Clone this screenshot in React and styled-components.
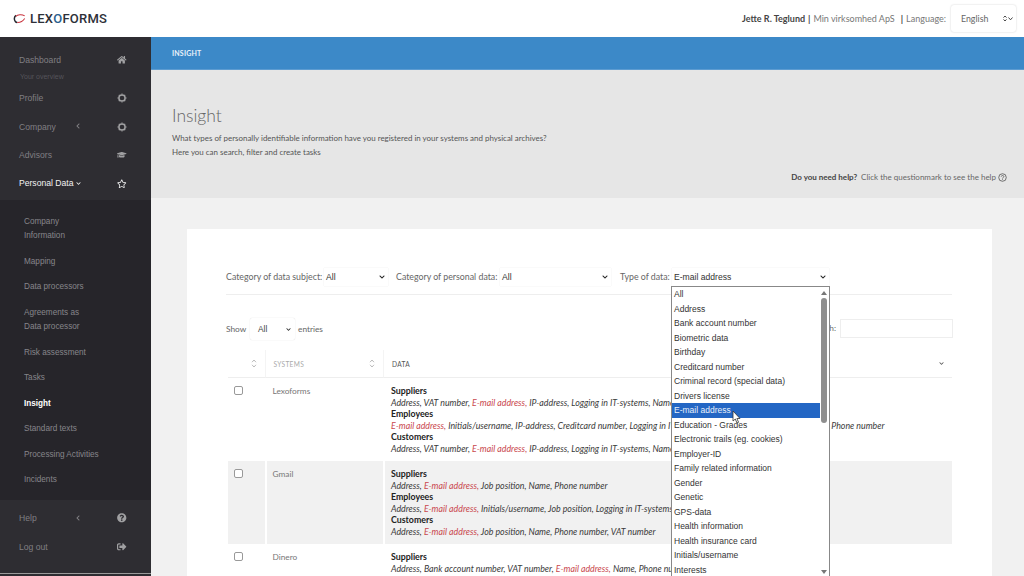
import React from 'react';
import styled, { createGlobalStyle } from 'styled-components';
import { FaHome, FaGraduationCap, FaRegStar, FaQuestionCircle, FaSignOutAlt, FaChevronDown, FaChevronLeft } from 'react-icons/fa';

const Global = createGlobalStyle`
  html, body { margin: 0; padding: 0; height: 576px; overflow: hidden; background: #fff; }
  body { font-family: Lato, "Liberation Sans", sans-serif; color: #555; }
  * { box-sizing: border-box; }
`;
const Page = styled.div`width: 1024px; height: 576px; overflow: hidden; display: flex; flex-direction: column; position: relative;`;
const Header = styled.header`height: 37px; flex: none; display: flex; align-items: center; background: #fff; padding: 0 8px 0 13px;`;
const Logo = styled.div`display: flex; align-items: center; gap: 4px;`;
const LogoText = styled.span`font-family: Roboto, sans-serif; font-weight: 500; font-size: 13px; letter-spacing: 0.25px; color: #2d3038;`;
const LogoO = styled.span`color: #2b5f8f;`;
const UserInfo = styled.div`margin-left: auto; display: flex; align-items: center; font-size: 9px; color: #777;`;
const UserName = styled.b`color: #444; font-weight: 700;`;
const Pipe = styled.span`color: #444; margin: 0 ${p => p.$r || 3}px 0 ${p => p.$l || 3}px; font-weight: 700;`;
const LangSelect = styled.div`width: 65px; height: 27px; margin-left: 5px; border-radius: 3px; background: #fff; box-shadow: 0 0 2px rgba(0,0,0,.2); display: flex; align-items: center; justify-content: space-between; padding: 0 3px 0 10px; color: #666; font-size: 8.8px;`;
const Body = styled.div`flex: 1; display: flex; min-height: 0;`;
const Sidebar = styled.nav`width: 151px; flex: none; background: #2e2d32; display: flex; flex-direction: column; padding-top: 9px; font-family: "Liberation Sans", sans-serif;`;
const SideRule = styled.div`height: 1px; background: #9a9a9a; margin-top: auto; margin-bottom: 2px; flex: none;`;
const MainItem = styled.div`height: 28.4px; flex: none; display: flex; align-items: center; padding: 0 24px 0 19px; font-size: 8.6px; color: ${p => (p.$active ? '#f2f2f2' : '#807f83')}; position: relative;`;
const ItemLabel = styled.span`flex: 1; display: flex; align-items: center; gap: 3px;`;
const Arrow = styled.span`position: absolute; left: 75px; top: 11px; display: flex; font-size: 6px;`;
const ItemIcon = styled.span`width: 10px; display: flex; justify-content: center; font-size: 9.5px; color: ${p => (p.$active ? '#eee' : '#a0a0a2')};`;
const Tagline = styled.div`height: 9.6px; padding-left: 20px; font-size: 7px; line-height: 6px; color: #55545a; flex: none;`;
const SubMenu = styled.div`background: #26252a; height: 300px; flex: none; margin-top: 2.4px; margin-bottom: 4px; padding-top: 15px; display: flex; flex-direction: column; gap: 11px; padding-left: 24px;`;
const SubItem = styled.div`font-size: 8.2px; line-height: 14.5px; color: ${p => (p.$active ? '#fff' : '#87868a')}; font-weight: ${p => (p.$active ? 700 : 400)};`;
const Main = styled.main`flex: 1; min-width: 0; background: #f1f1f1; display: flex; flex-direction: column;`;
const Crumb = styled.div`height: 33px; flex: none; background: #3c89c8; color: #e9f2fa; font-size: 7px; font-weight: 700; display: flex; align-items: center; padding-left: 21px; letter-spacing: .2px; border-bottom: 1px solid #5d9cd1;`;
const Hero = styled.section`height: 128px; flex: none; background: #e6e6e6; padding: 34px 17px 0 21px; display: flex; flex-direction: column;`;
const Title = styled.h1`margin: -1px 0 3px; font-size: 17.5px; line-height: 25px; font-weight: 300; color: #666;`;
const Para = styled.p`margin: 0; font-size: 7.95px; line-height: 14.2px; color: #555;`;
const HelpLine = styled.div`margin-top: 13px; align-self: flex-end; display: flex; align-items: center; gap: 2px; font-size: 8px; color: #666;`;
const HelpBold = styled.b`color: #444; font-weight: 700; margin-right: 2px;`;
const Card = styled.section`margin: 31px 32px 0 36px; background: #fff; padding: 35px 40px 0 39px; flex: 1; min-height: 0; overflow: hidden;`;
const Filters = styled.div`display: flex; align-items: flex-start; height: 31px; padding-top: 4px; font-size: 8.8px; color: #666; border-bottom: 1px solid #eee;`;
const FilterLabel = styled.span`width: ${p => p.$w}px; flex: none; line-height: 18px; white-space: nowrap;`;
const Picker = styled.div`height: 18px; width: ${p => p.$w}px; margin-right: ${p => p.$mr || 0}px; flex: none; display: flex; align-items: center; justify-content: space-between; color: #333; font-family: "Liberation Sans", sans-serif; font-size: 8.6px; padding: 0 3px 0 2px; background: #fff; box-shadow: 0 0 1px rgba(0,0,0,.12);`;
const Length = styled.div`display: flex; align-items: center; font-size: 8.3px; color: #666; height: 20px; margin-top: 24px; gap: 3px;`;
const LengthLabel = styled.span`width: 21px;`;
const LengthPicker = styled.div`width: 45px; height: 22px; display: flex; align-items: center; justify-content: space-between; padding: 0 4px 0 8px; color: #444; border-radius: 2px; box-shadow: 0 0 1px rgba(0,0,0,.2); font-family: "Liberation Sans", sans-serif;`;
const Search = styled.div`position: absolute; left: 840px; top: 319px; width: 113px; height: 19px; border: 1px solid #eee; background: #fff;`;
const SearchLabel = styled.span`position: absolute; right: 188px; top: 323px; font-size: 8.3px; color: #666;`;
const Table = styled.div`margin: 11px 0 0 2px; display: grid; grid-template-columns: 36.5px 118.5px 1fr;`;
const Th = styled.div`height: 28px; border-bottom: 1px solid #eee; border-left: ${p => (p.$first ? '0' : '1px solid #f4f4f4')}; display: flex; align-items: center; justify-content: space-between; padding: 0 8px 0 8px; font-size: 6.6px; letter-spacing: .3px; color: ${p => p.$dim ? '#aaa' : '#555'};`;
const Sort = styled.svg`width: 6px; height: 9px; flex: none; margin-left: auto; color: #aaa;`;
const Td = styled.div`background: ${p => (p.$odd ? '#f1f1f1' : '#fff')}; border-left: ${p => (p.$first ? '0' : '2px solid #fff')}; padding: ${p => (p.$first ? '8px 0 0 6px' : '7px 0 0 6px')}; min-height: 83px; overflow: hidden; white-space: nowrap;`;
const Check = styled.span`display: block; width: 9px; height: 9px; border: 1px solid #999; border-radius: 2px; background: #fff;`;
const SystemName = styled.span`display: block; font-size: 8.3px; color: #777; line-height: 12px;`;
const Group = styled.b`display: block; font-size: 8.8px; line-height: 11.6px; color: #222; font-weight: 700;`;
const Line = styled.i`display: block; font-size: 8.8px; line-height: 11.6px; color: #3a3a3a;`;
const Mail = styled.span`color: #c9474d;`;
const Dropdown = styled.div`position: absolute; left: 671px; top: 286px; width: 159px; height: 291px; background: #fff; border: 1px solid #888; border-bottom: 0; font-family: "Liberation Sans", sans-serif; font-size: 8.5px; color: #333; display: flex;`;
const DropList = styled.div`width: 148px; flex: none;`;
const Option = styled.div`height: 14.5px; line-height: 14.5px; padding-left: 2px; white-space: nowrap; background: ${p => (p.$sel ? '#2366c4' : 'transparent')}; color: ${p => (p.$sel ? '#e8f0fb' : '#333')};`;
const Track = styled.div`flex: 1; background: #fff; position: relative;`;
const Thumb = styled.div`position: absolute; left: 1px; top: 11px; width: 6px; height: 125px; border-radius: 3px; background: #8e8e8e;`;
const TrackArrow = styled.span`position: absolute; left: 1px; width: 0; height: 0; border-left: 3px solid transparent; border-right: 3px solid transparent; ${p => p.$up ? 'top: 4px; border-bottom: 4px solid #777;' : 'bottom: 3px; border-top: 4px solid #777;'}`;
const Cursor = styled.svg`position: absolute; left: 732px; top: 410px; width: 9px; height: 14px;`;

const E = () => <Mail>E-mail address,</Mail>;
const SortIcon = () => (
  <Sort viewBox="0 0 6 9" fill="none" stroke="currentColor" strokeWidth=".8"><path d="M1 3.2 3 1l2 2.2M1 5.8 3 8l2-2.2" /></Sort>
);
const Chevron = ({ size = 6, color = '#222' }) => <FaChevronDown size={size} color={color} />;
const Ring = () => (
  <svg width="10" height="10" viewBox="0 0 10 10" fill="none" stroke="currentColor">
    <circle cx="5" cy="5" r="3.1" strokeWidth="1.5" />
    <path d="M5 .4v1.200M5 8.400v1.200M.4 5h1.200M8.400 5h1.200M1.800 1.800l.8.8M7.400 7.400l.8.8M1.800 8.200l.8-.8M7.400 2.600l.8-.8" strokeWidth="1.100" />
  </svg>
);

const options = ['All','Address','Bank account number','Biometric data','Birthday','Creditcard number','Criminal record (special data)','Drivers license','E-mail address','Education - Grades','Electronic trails (eg. cookies)','Employer-ID','Family related information','Gender','Genetic','GPS-data','Health information','Health insurance card','Initials/username','Interests'];

export default function App() {
  return (
    <Page>
      <Global />
      <Header>
        <Logo>
          <svg width="13" height="12" viewBox="0 0 14 12" fill="none">
            <path d="M3.2 2.2C1.200 3.600.800 7 2.600 8.800c.5.5 1.200.8 2 .9" stroke="#23262e" strokeWidth="1.600" />
            <path d="M3 3.200C5 1.200 9.500.800 12.600 2.600M12.600 5.400C10.500 8.600 7.500 9.800 4.600 9.700" stroke="#c8323c" strokeWidth="1.100" />
          </svg>
          <LogoText>LEX<LogoO>O</LogoO>FORMS</LogoText>
        </Logo>
        <UserInfo>
          <UserName>Jette R. Teglund</UserName><Pipe>|</Pipe>Min virksomhed ApS<Pipe $l={6}>|</Pipe>Language:
          <LangSelect>English<svg width="10" height="7" viewBox="0 0 10 7" fill="none" stroke="#333" strokeWidth=".9"><path d="M.5 2.600 2 1l1.500 1.600M.5 4.400 2 6l1.500-1.600M5.500 2.500 7.500 4.800 9.500 2.500" /></svg></LangSelect>
        </UserInfo>
      </Header>
      <Body>
        <Sidebar>
          <MainItem><ItemLabel>Dashboard</ItemLabel><ItemIcon><FaHome /></ItemIcon></MainItem>
          <Tagline>Your overview</Tagline>
          <MainItem><ItemLabel>Profile</ItemLabel><ItemIcon><Ring /></ItemIcon></MainItem>
          <MainItem><ItemLabel>Company</ItemLabel><Arrow><FaChevronLeft /></Arrow><ItemIcon><Ring /></ItemIcon></MainItem>
          <MainItem><ItemLabel>Advisors</ItemLabel><ItemIcon><FaGraduationCap /></ItemIcon></MainItem>
          <MainItem $active><ItemLabel>Personal Data <FaChevronDown size={5} /></ItemLabel><ItemIcon $active><FaRegStar /></ItemIcon></MainItem>
          <SubMenu>
            <SubItem>Company<br />Information</SubItem>
            <SubItem>Mapping</SubItem>
            <SubItem>Data processors</SubItem>
            <SubItem>Agreements as<br />Data processor</SubItem>
            <SubItem>Risk assessment</SubItem>
            <SubItem>Tasks</SubItem>
            <SubItem $active>Insight</SubItem>
            <SubItem>Standard texts</SubItem>
            <SubItem>Processing Activities</SubItem>
            <SubItem>Incidents</SubItem>
          </SubMenu>
          <MainItem><ItemLabel>Help</ItemLabel><Arrow><FaChevronLeft /></Arrow><ItemIcon><FaQuestionCircle /></ItemIcon></MainItem>
          <MainItem><ItemLabel>Log out</ItemLabel><ItemIcon><FaSignOutAlt /></ItemIcon></MainItem>
          <SideRule />
        </Sidebar>
        <Main>
          <Crumb>INSIGHT</Crumb>
          <Hero>
            <Title>Insight</Title>
            <Para>What types of personally identifiable information have you registered in your systems and physical archives?</Para>
            <Para>Here you can search, filter and create tasks</Para>
            <HelpLine><HelpBold>Do you need help?</HelpBold> Click the questionmark to see the help
              <svg width="9" height="9" viewBox="0 0 10 10" fill="none" stroke="#444" strokeWidth=".8"><circle cx="5" cy="5" r="4.200" /><path d="M3.600 4C3.600 2.400 6.500 2.400 6.500 4 6.500 5 5 5 5 6.200M5 7v.8" /></svg>
            </HelpLine>
          </Hero>
          <Card>
            <Filters>
              <FilterLabel $w={98}>Category of data subject:</FilterLabel><Picker $w={64} $mr={8}>All<Chevron /></Picker>
              <FilterLabel $w={104}>Category of personal data:</FilterLabel><Picker $w={111} $mr={9}>All<Chevron /></Picker>
              <FilterLabel $w={52}>Type of data:</FilterLabel><Picker $w={157}>E-mail address<Chevron /></Picker>
            </Filters>
            <Length><LengthLabel>Show</LengthLabel><LengthPicker>All<Chevron size={5} /></LengthPicker>entries</Length>
            <Table>
              <Th $first><SortIcon /></Th>
              <Th $dim>SYSTEMS<SortIcon /></Th>
              <Th>DATA<FaChevronDown size={5} color="#555" /></Th>

              <Td $first><Check /></Td>
              <Td><SystemName>Lexoforms</SystemName></Td>
              <Td>
                <Group>Suppliers</Group>
                <Line>Address, VAT number, <E /> IP-address, Logging in IT-systems, Name, Phone number</Line>
                <Group>Employees</Group>
                <Line><E /> Initials/username, IP-address, Creditcard number, Logging in IT-systems, Job position, Name, Social ID no, Phone number</Line>
                <Group>Customers</Group>
                <Line>Address, VAT number, <E /> IP-address, Logging in IT-systems, Name, Phone number</Line>
              </Td>

              <Td $first $odd><Check /></Td>
              <Td $odd><SystemName>Gmail</SystemName></Td>
              <Td $odd>
                <Group>Suppliers</Group>
                <Line>Address, <E /> Job position, Name, Phone number</Line>
                <Group>Employees</Group>
                <Line>Address, <E /> Initials/username, Job position, Logging in IT-systems, Name</Line>
                <Group>Customers</Group>
                <Line>Address, <E /> Job position, Name, Phone number, VAT number</Line>
              </Td>

              <Td $first><Check /></Td>
              <Td><SystemName>Dinero</SystemName></Td>
              <Td>
                <Group>Suppliers</Group>
                <Line>Address, Bank account number, VAT number, <E /> Name, Phone number</Line>
              </Td>
            </Table>
          </Card>
        </Main>
      </Body>
      <SearchLabel>Search:</SearchLabel>
      <Search />
      <Dropdown>
        <DropList>
          {options.map(o => <Option key={o} $sel={o === 'E-mail address'}>{o}</Option>)}
        </DropList>
        <Track><TrackArrow $up /><Thumb /><TrackArrow /></Track>
      </Dropdown>
      <Cursor viewBox="0 0 9 14"><path d="M1 1v10l2.300-2 1.700 4 1.600-.7-1.700-3.800H8z" fill="#fff" stroke="#333" strokeWidth=".8" /></Cursor>
    </Page>
  );
}
